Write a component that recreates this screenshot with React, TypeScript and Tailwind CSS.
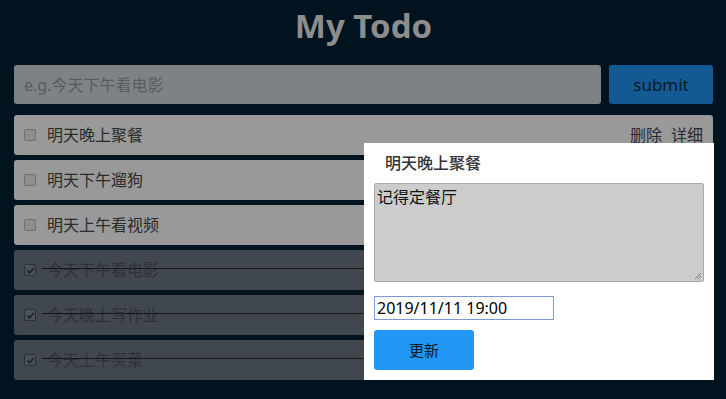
// ─── Todo page with detail popup ─────────────────────────────────────────────
const FONT = { fontFamily: '"Noto Sans", "Noto Sans CJK SC", sans-serif' };

const TODOS = [
  { id: 1, text: "明天晚上聚餐", done: false, actions: true },
  { id: 2, text: "明天下午遛狗", done: false },
  { id: 3, text: "明天上午看视频", done: false },
  { id: 4, text: "今天下午看电影", done: true },
  { id: 5, text: "今天晚上写作业", done: true },
  { id: 6, text: "今天上午买菜", done: true },
];

function Box({ checked }: { checked: boolean }) {
  if (checked) {
    return (
      <span className="w-[12px] h-[12px] rounded-[2px] border border-[#2b3035] bg-[#4a5259] flex items-center justify-center shrink-0">
        <svg viewBox="0 0 10 10" className="w-[9px] h-[9px]">
          <path d="M1.5 5.2 L4 7.6 L8.6 2.2" stroke="#1c2126" strokeWidth="1.8" fill="none" />
        </svg>
      </span>
    );
  }
  return <span className="w-[12px] h-[12px] rounded-[2px] border border-[#6f6f6f] bg-[#8e8e8e] shrink-0" />;
}

export default function App() {
  return (
    <div className="relative w-[726px] h-[399px] bg-[#00131f] overflow-hidden" style={FONT}>
      <div className="px-[14px] w-[727px]">
        {/* Title */}
        <h1 className="h-[65px] flex items-center justify-center text-[33px] font-bold text-[#8d8d8d] pb-[14px]">
          My Todo
        </h1>

        {/* Input */}
        <div className="flex gap-[8px] h-[39px]">
          <div className="flex-1 bg-[#7f8285] rounded-[3px] flex items-center px-[10px] text-[16px] text-[#585c60]">
            e.g.今天下午看电影
          </div>
          <button className="w-[104px] bg-[#135a94] rounded-[3px] text-[17px] text-[#0a1a26]">submit</button>
        </div>

        {/* List */}
        <ul className="mt-[11px] flex flex-col gap-[5px]">
          {TODOS.map((t) => (
            <li
              key={t.id}
              className={`relative h-[40px] rounded-[3px] flex items-center px-[10px] gap-[11px] text-[16px] ${
                t.done ? "bg-[#40474e] text-[#2c3237]" : "bg-[#999999] text-[#2a2a2a]"
              }`}
            >
              <Box checked={t.done} />
              <span className="flex-1">{t.text}</span>
              {t.actions && (
                <span className="flex gap-[9px] text-[#2a2a36]">
                  <span>删除</span>
                  <span>详细</span>
                </span>
              )}
              {t.done && <span className="absolute left-[28px] right-0 top-[18px] h-px bg-[#14191e]" />}
            </li>
          ))}
        </ul>
      </div>

      {/* Detail popup */}
      <div className="absolute left-[364px] top-[143px] w-[350px] h-[237px] bg-white px-[10px]">
        <div className="h-[40px] flex items-center pl-[11px] text-[16px] font-medium text-[#333]">明天晚上聚餐</div>
        <div className="h-[99px] bg-[#cccccc] border border-[#a9a9a9] rounded-[2px] relative px-[2px] pt-[3px] text-[16px] text-[#111] leading-[20px]">
          记得定餐厅
          <svg viewBox="0 0 8 8" className="absolute right-[1px] bottom-[1px] w-[8px] h-[8px]">
            <path d="M7 1 L1 7 M7 4 L4 7" stroke="#777" strokeWidth="1" />
          </svg>
        </div>
        <div className="mt-[14px] w-[180px] h-[24px] border border-[#7a9ad6] flex items-center px-[2px] text-[16px] text-black">
          2019/11/11 19:00
        </div>
        <button className="mt-[10px] w-[100px] h-[40px] rounded-[3px] bg-[#2196f3] text-[15px] text-[#0d1b26]">更新</button>
      </div>
    </div>
  );
}
